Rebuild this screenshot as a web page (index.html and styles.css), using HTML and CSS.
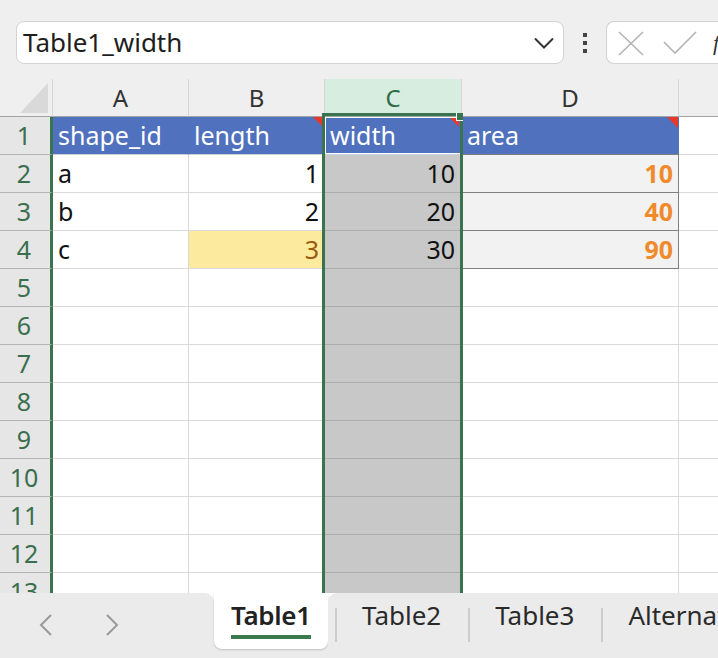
FILE: index.html
```html
<!DOCTYPE html>
<html>
<head>
<meta charset="utf-8">
<link rel="stylesheet" href="styles.css">
</head>
<body>
<div class="app">
  <div class="topbar">
    <div class="namebox">
      <span class="name">Table1_width</span>
      <svg class="chev" width="20" height="12" viewBox="0 0 20 12"><path d="M1 1.5 L10 10.5 L19 1.5" fill="none" stroke="#333" stroke-width="2"/></svg>
    </div>
    <div class="dots"><i></i><i></i><i></i></div>
    <div class="fbox">
      <svg class="xicon" width="26" height="25" viewBox="0 0 26 25"><path d="M1 1 L25 24 M25 1 L1 24" fill="none" stroke="#b4b4b4" stroke-width="1.6"/></svg>
      <svg class="ckicon" width="34" height="24" viewBox="0 0 34 24"><path d="M1 11 L12 22 L33 1" fill="none" stroke="#b4b4b4" stroke-width="1.6"/></svg>
      <span class="fx">fx</span>
    </div>
  </div>

  <div class="sheet">
    <div class="grid">
      <div class="corner"><span class="tri"></span></div>
      <div class="ch">A</div>
      <div class="ch">B</div>
      <div class="ch sel">C</div>
      <div class="ch">D</div>
      <div class="ch last"></div>

      <div class="rh">1</div>
      <div class="c hd">shape_id</div>
      <div class="c hd">length<span class="note"></span></div>
      <div class="c hd active">width<span class="note"></span></div>
      <div class="c hd dcol">area<span class="note"></span></div>
      <div class="c e"></div>

      <div class="rh">2</div>
      <div class="c">a</div>
      <div class="c num">1</div>
      <div class="c num selc">10</div>
      <div class="c num calc">10</div>
      <div class="c e"></div>

      <div class="rh">3</div>
      <div class="c">b</div>
      <div class="c num">2</div>
      <div class="c num selc">20</div>
      <div class="c num calc">40</div>
      <div class="c e"></div>

      <div class="rh">4</div>
      <div class="c">c</div>
      <div class="c num neutral">3</div>
      <div class="c num selc">30</div>
      <div class="c num calc">90</div>
      <div class="c e"></div>

      <div class="rh">5</div><div class="c"></div><div class="c"></div><div class="c selc"></div><div class="c"></div><div class="c e"></div>
      <div class="rh">6</div><div class="c"></div><div class="c"></div><div class="c selc"></div><div class="c"></div><div class="c e"></div>
      <div class="rh">7</div><div class="c"></div><div class="c"></div><div class="c selc"></div><div class="c"></div><div class="c e"></div>
      <div class="rh">8</div><div class="c"></div><div class="c"></div><div class="c selc"></div><div class="c"></div><div class="c e"></div>
      <div class="rh">9</div><div class="c"></div><div class="c"></div><div class="c selc"></div><div class="c"></div><div class="c e"></div>
      <div class="rh">10</div><div class="c"></div><div class="c"></div><div class="c selc"></div><div class="c"></div><div class="c e"></div>
      <div class="rh">11</div><div class="c"></div><div class="c"></div><div class="c selc"></div><div class="c"></div><div class="c e"></div>
      <div class="rh">12</div><div class="c"></div><div class="c"></div><div class="c selc"></div><div class="c"></div><div class="c e"></div>
      <div class="rh">13</div><div class="c"></div><div class="c"></div><div class="c selc"></div><div class="c"></div><div class="c e"></div>
    </div>
    <div class="selection"><span class="handle"></span></div>
  </div>

  <div class="tabbar">
    <div class="nav">
      <svg class="arr" width="14" height="22" viewBox="0 0 14 22"><path d="M12 1 L2 11 L12 21" fill="none" stroke="#9a9a9a" stroke-width="2"/></svg>
      <svg class="arr" width="14" height="22" viewBox="0 0 14 22"><path d="M2 1 L12 11 L2 21" fill="none" stroke="#9a9a9a" stroke-width="2"/></svg>
    </div>
    <div class="tab active-tab"><span class="tlabel">Table1</span></div>
    <div class="rest">
      <span class="sep"></span>
      <div class="tab">Table2</div>
      <span class="sep"></span>
      <div class="tab">Table3</div>
      <span class="sep"></span>
      <div class="tab">Alternative</div>
    </div>
  </div>
</div>
</body>
</html>
```

FILE: styles.css
```css
* { box-sizing: border-box; }
html, body { margin: 0; padding: 0; }
body {
  width: 718px;
  height: 658px;
  overflow: hidden;
  background: #efefef;
  font-family: "Noto Sans", "Open Sans", sans-serif;
}
.app { width: 718px; height: 658px; display: flex; flex-direction: column; overflow: hidden; }

/* top bar */
.topbar {
  height: 79px;
  flex: none;
  display: flex;
  align-items: flex-start;
  padding: 21px 0 0 16px;
}
.namebox {
  width: 548px;
  height: 43px;
  background: #fff;
  border: 1px solid #d3d3d3;
  border-radius: 8px;
  display: flex;
  align-items: center;
  padding: 0 9px 0 6px;
  flex: none;
}
.name { font-size: 26px; line-height: 41px; color: #1e1e1e; flex: 1; white-space: nowrap; }
.chev { flex: none; margin-top: 1px; }
.dots {
  flex: none;
  width: 4px;
  margin: 12px 19px 0 19px;
  display: flex;
  flex-direction: column;
  gap: 4px;
}
.dots i { display: block; width: 4px; height: 4px; background: #444; }
.fbox {
  flex: none;
  width: 140px;
  height: 43px;
  background: #fff;
  border: 1px solid #d3d3d3;
  border-right: none;
  border-radius: 8px 0 0 8px;
  display: flex;
  align-items: flex-start;
  padding: 9px 0 0 11px;
  overflow: hidden;
}
.xicon { flex: none; }
.ckicon { flex: none; margin-left: 19px; }
.fx { font-family: "Liberation Serif", serif; font-style: italic; font-size: 22px; line-height: 24px; margin-left: 16px; color: #333; }

/* sheet */
.sheet {
  position: relative;
  height: 514px;
  flex: none;
  overflow: hidden;
  background: #fff;
}
.grid {
  display: grid;
  grid-template-columns: 53px 136px 136px 137px 217px 1fr;
  grid-auto-rows: 38px;
}
.corner {
  background: #efefef;
  border-right: 1px solid #d6d6d6;
  border-bottom: 1px solid #a3a3a3;
  position: relative;
}
.tri {
  position: absolute;
  right: 4px;
  bottom: 3px;
  width: 0; height: 0;
  border-left: 28px solid transparent;
  border-bottom: 30px solid #d9d9d9;
}
.ch {
  background: #efefef;
  border-right: 1px solid #d6d6d6;
  border-bottom: 1px solid #a3a3a3;
  text-align: center;
  font-size: 24px;
  line-height: 37px;
  color: #333;
}
.ch.sel { background: #d6ede0; color: #2f6b45; }
.ch.last { border-right: none; }
.rh {
  background: #e6e6e6;
  border-right: 3px solid #3a7350;
  border-bottom: 1px solid #b4b4b4;
  text-align: center;
  padding-right: 2px;
  font-size: 25px;
  line-height: 37px;
  color: #3a6f4e;
}
.c {
  position: relative;
  border-right: 1px solid #dadada;
  border-bottom: 1px solid #dadada;
  font-size: 25px;
  line-height: 37px;
  color: #111;
  padding: 0 5px;
  white-space: nowrap;
}
.c.num { text-align: right; }
.c.e { border-right: none; }
.c.hd { background: #5071be; color: #fff; border-right-color: #5071be; border-bottom-color: #c9cfdc; }
.c.hd.dcol { border-right-color: #5071be; border-bottom-color: #7f7f7f; }
.c.hd.active { box-shadow: inset 0 0 0 1px #fff; }
.c.selc { background: #c8c8c8; border-bottom-color: #adadad; padding-right: 6px; }
.c.neutral { background: #fcea9f; color: #9c5a0c; }
.c.calc {
  background: #f2f2f2;
  color: #f08a2b;
  font-weight: 700;
  border-right-color: #7f7f7f;
  border-bottom-color: #7f7f7f;
}
.note {
  position: absolute;
  top: 0;
  right: 0;
  width: 0; height: 0;
  border-left: 11px solid transparent;
  border-top: 11px solid #e8382b;
}
.c.hd.active .note { top: 1px; right: 2px; border-left-width: 9px; border-top-width: 9px; }

.selection {
  position: absolute;
  left: 322px;
  top: 34px;
  width: 141px;
  height: 520px;
  border: 3px solid #3a7350;
  pointer-events: none;
}
.handle {
  position: absolute;
  right: -3px;
  top: -3px;
  width: 7px;
  height: 8px;
  background: #3a7350;
  border-left: 1px solid #fff;
  border-bottom: 1px solid #fff;
}

/* tab bar */
.tabbar {
  height: 65px;
  flex: none;
  display: flex;
  background: linear-gradient(#ffffff 0 12px, #ebebeb 12px);
}
.nav {
  width: 214px;
  flex: none;
  background: #ebebeb;
  border-top-right-radius: 9px;
  display: flex;
  align-items: flex-start;
  padding: 21px 0 0 39px;
  gap: 52px;
}
.arr { flex: none; }
.tab {
  flex: none;
  font-size: 26px;
  line-height: 36px;
  color: #2a2a2a;
  padding: 4px 27px 0 25px;
  white-space: nowrap;
}
.active-tab {
  width: 114px;
  height: 56px;
  background: #fff;
  border-radius: 0 0 8px 8px;
  box-shadow: 0 1px 2px rgba(0,0,0,0.18);
  padding: 4px 0 0 17px;
  font-weight: 600;
  color: #222;
}
.tlabel {
  display: inline-block;
  border-bottom: 4px solid #3b7a4c;
  line-height: 36px;
  padding-bottom: 2px;
  letter-spacing: -0.3px;
}
.rest {
  flex: 1;
  background: #ebebeb;
  border-top-left-radius: 9px;
  display: flex;
  align-items: flex-start;
  padding-left: 7px;
  overflow: hidden;
}
.sep { flex: none; width: 2px; height: 34px; background: #cdcdcd; margin-top: 15px; }
```
